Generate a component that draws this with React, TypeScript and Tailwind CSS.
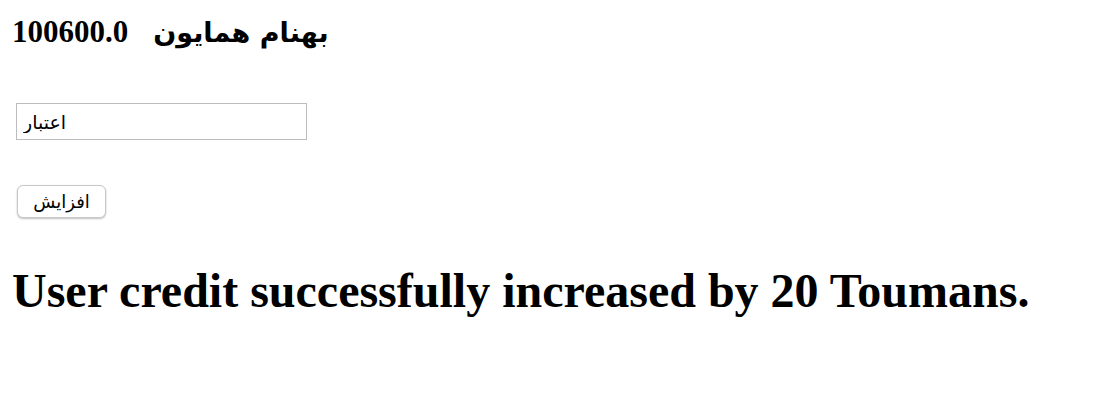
export default function App() {
  return (
    <div className="min-h-[410px] bg-white px-3 pt-[16px] text-black [font-family:'Liberation_Serif','DejaVu_Sans',serif]">
      {/* balance + name */}
      <h3 className="flex h-[33px] items-baseline gap-[25px] text-[31px] leading-[32px] font-bold">
        <span>100600.0</span>
        <span dir="rtl" className="[font-family:'DejaVu_Sans',sans-serif] text-[27px]">بهنام همایون</span>
      </h3>

      <div className="mt-[54px]">
        <input
          type="text"
          placeholder="اعتبار"
          className="ml-[4px] block h-[37px] w-[291px] border border-[#bdbdbd] bg-white px-[6px] text-[19px] [font-family:'DejaVu_Sans',sans-serif] placeholder:text-black outline-none"
        />
      </div>

      <button className="mt-[45px] ml-[5px] block h-[33px] w-[89px] rounded-[6px] border border-[#c8c8c8] bg-white text-[18px] [font-family:'DejaVu_Sans',sans-serif] shadow-[0_1px_2px_rgba(0,0,0,0.25)]">
        افزایش
      </button>

      <h1 className="mt-[45px] text-[48px] leading-[55px] font-bold">
        User credit successfully increased by 20 Toumans.
      </h1>
    </div>
  );
}
